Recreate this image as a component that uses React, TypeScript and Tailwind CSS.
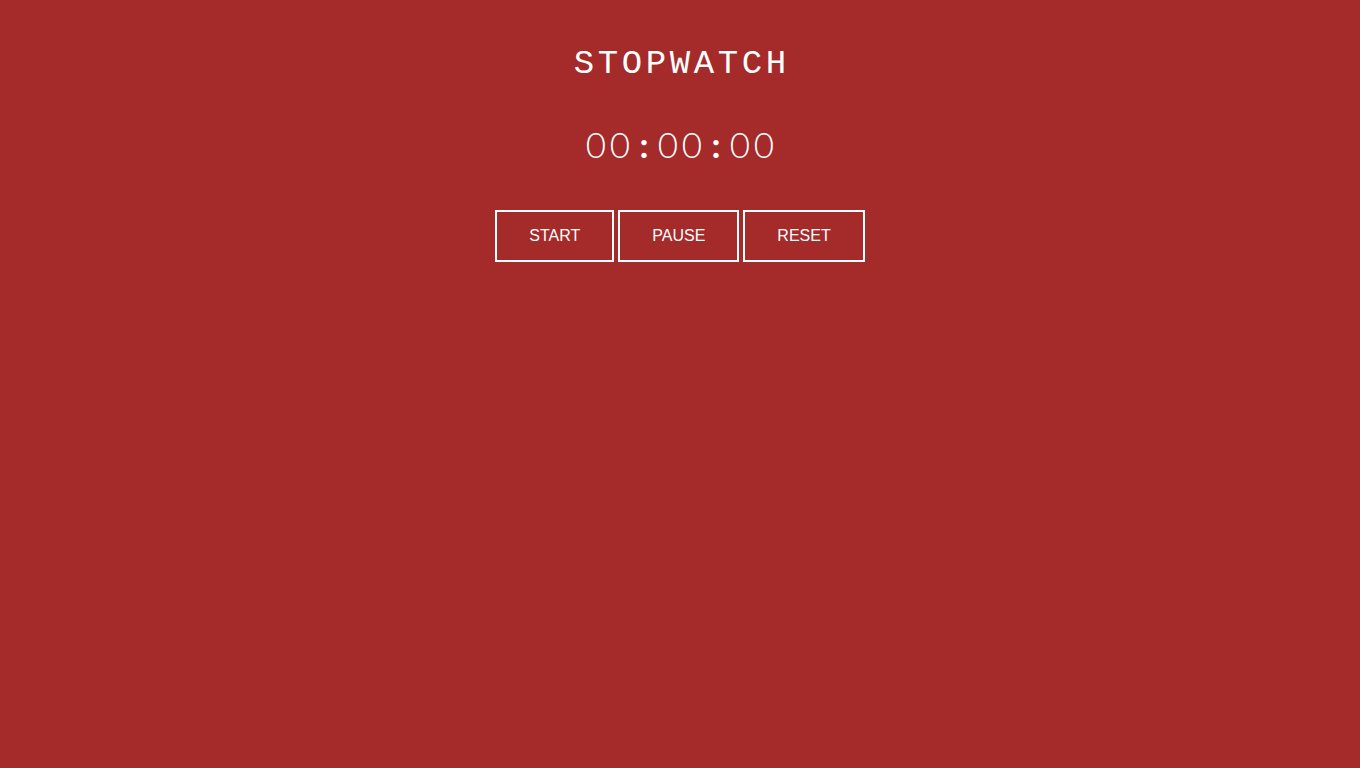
import React, { useEffect, useRef, useState } from 'react';

const pad = (n: number) => String(n).padStart(2, '0');

const App: React.FC = () => {
  const [elapsed, setElapsed] = useState(0);
  const [running, setRunning] = useState(false);
  const timer = useRef<number | null>(null);

  useEffect(() => {
    if (!running) return;
    timer.current = window.setInterval(() => setElapsed(e => e + 1), 10);
    return () => {
      if (timer.current) window.clearInterval(timer.current);
    };
  }, [running]);

  const minutes = Math.floor(elapsed / 6000);
  const seconds = Math.floor((elapsed % 6000) / 100);
  const hundredths = elapsed % 100;
  const display = `${pad(minutes)}:${pad(seconds)}:${pad(hundredths)}`;

  const btn =
    "h-[52px] border-2 border-white bg-transparent px-[32px] text-[16px] text-white font-['Liberation_Sans',Arial,sans-serif] cursor-pointer";

  return (
    <div className="min-h-screen w-full bg-[#a52a2a] pt-[44px] text-white">
      <div className="flex flex-col items-center">
        <h1 className="pl-[3.6px] text-[34px] leading-[40px] tracking-[3.6px] font-normal font-['Liberation_Mono','Courier_New',monospace]">
          STOPWATCH
        </h1>
        <div className="mt-[38px] flex text-[35px] leading-[44px] font-light font-['Lato','Liberation_Sans',sans-serif]">
          {display.split('').map((ch, i) => (
            <span
              key={i}
              className={ch === ':' ? 'w-[24px] text-center font-bold' : 'w-[24px] text-center'}
            >
              {ch}
            </span>
          ))}
        </div>
        <div className="mt-[44px] flex gap-[4px]">
          <button className={btn} onClick={() => setRunning(true)}>START</button>
          <button className={btn} onClick={() => setRunning(false)}>PAUSE</button>
          <button
            className={btn}
            onClick={() => {
              setRunning(false);
              setElapsed(0);
            }}
          >
            RESET
          </button>
        </div>
      </div>
    </div>
  );
};

export default App;
